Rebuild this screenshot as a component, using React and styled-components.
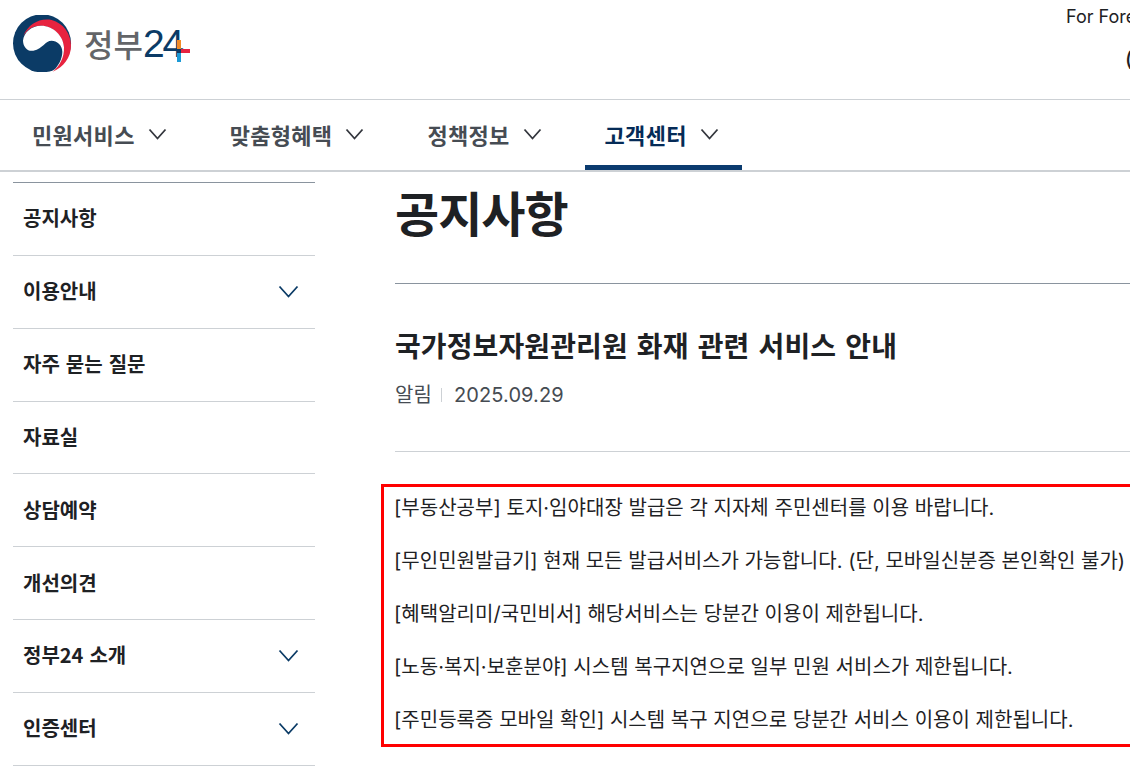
import React from 'react'
import styled, { createGlobalStyle } from 'styled-components'

const Global = createGlobalStyle`
  html, body {
    margin: 0;
    padding: 0;
    background: #fff;
    overflow: hidden;
    height: 100%;
  }
  body {
    font-family: Inter, "Noto Sans CJK KR", sans-serif;
    color: #1e2124;
  }
`

const Page = styled.div`
  width: 1130px;
  height: 771px;
  overflow: hidden;
`

const TopBar = styled.header`
  height: 99px;
  border-bottom: 1px solid #cdd1d5;
  display: flex;
  justify-content: space-between;
  padding-left: 13px;
`

const Logo = styled.a`
  display: flex;
  align-items: center;
  height: 86px;
  gap: 12px;
`

const LogoWord = styled.span`
  font-family: "Noto Sans CJK KR", sans-serif;
  font-size: 32px;
  font-weight: 500;
  color: #636568;
  line-height: 1;
`

const LogoNum = styled.span`
  position: relative;
  font-family: "Liberation Sans", sans-serif;
  font-size: 39px;
  letter-spacing: -2px;
  margin-left: -12px;
  color: #0b3b66;
  line-height: 1;
`

const LogoPlus = styled.svg`
  position: absolute;
  left: 34px;
  top: 16px;
`

const TopLinks = styled.div`
  width: 64px;
  overflow: hidden;
  white-space: nowrap;
`

const Foreign = styled.div`
  font-size: 18px;
  line-height: 22px;
  margin-top: 6px;
  color: #1e2124;
`

const Bracket = styled.div`
  font-size: 20px;
  font-weight: 500;
  line-height: 26px;
  margin-top: 18px;
  padding-left: 59px;
  color: #1e2124;
`

const Nav = styled.nav`
  height: 70px;
  border-bottom: 2px solid #cdd1d5;
  display: flex;
  padding-left: 12px;
  gap: 20px;
`

const NavItem = styled.a`
  display: flex;
  align-items: center;
  gap: 12px;
  height: 70px;
  padding: 3px 22px 0 20px;
  box-sizing: border-box;
  font-size: 22px;
  font-weight: 700;
  letter-spacing: 0.3px;
  color: ${p => (p.$active ? '#052b57' : '#464c53')};
  border-bottom: 5px solid ${p => (p.$active ? '#0b3b6f' : 'transparent')};
`

const Body = styled.div`
  display: flex;
  padding-left: 13px;
  padding-top: 10px;
`

const Side = styled.aside`
  width: 302px;
  flex: none;
  border-top: 1px solid #8a949e;
`

const SideItem = styled.a`
  height: 72.85px;
  box-sizing: border-box;
  display: flex;
  align-items: center;
  justify-content: space-between;
  padding: 0 15px 2px 10px;
  border-bottom: 1px solid #cdd1d5;
  font-family: "Noto Sans CJK KR", sans-serif;
  font-size: 20px;
  font-weight: 700;
  word-spacing: 1.5px;
  color: #1e2124;
  svg {
    margin-top: 2px;
  }
`

const Main = styled.main`
  width: 760px;
  flex: none;
  margin-left: 80px;
`

const PageTitle = styled.h1`
  margin: 1px 0 0;
  font-size: 48px;
  line-height: 64px;
  font-weight: 700;
  letter-spacing: -1px;
  color: #1e2124;
  padding-bottom: 36px;
  border-bottom: 1px solid #8a949e;
`

const PostTitle = styled.h2`
  margin: 43px 0 0;
  font-size: 28px;
  line-height: 40px;
  font-weight: 700;
  letter-spacing: 0.1px;
  word-spacing: 2.4px;
  color: #1e2124;
`

const Meta = styled.div`
  display: flex;
  align-items: center;
  margin-top: 13px;
  padding-bottom: 41px;
  border-bottom: 1px solid #cdd1d5;
  font-size: 20px;
  line-height: 30px;
  letter-spacing: 0.1px;
  color: #464c53;
`

const Tag = styled.span`
  padding-right: 10px;
  margin-right: 12px;
  position: relative;
  &::after {
    content: '';
    position: absolute;
    right: 0;
    top: 8px;
    height: 14px;
    width: 1px;
    background: #cdd1d5;
  }
`

const Notice = styled.div`
  margin: 32px 0 0 -14px;
  border: 3px solid #ff0000;
  border-right: none;
  padding: 1px 0 4px 10px;
  white-space: nowrap;
  overflow: hidden;
`

const NoticeLine = styled.p`
  margin: 0 0 13px;
  font-size: 20px;
  line-height: 40px;
  letter-spacing: 0.03px;
  color: #1e2124;
  &:last-child {
    margin-bottom: 0;
  }
`

const ChevronSvg = styled.svg`
  flex: none;
  color: ${p => p.$color};
`

const Chevron = ({ w, h, color }) => (
  <ChevronSvg width={w + 4} height={h + 4} viewBox={`-2 -2 ${w + 4} ${h + 4}`} $color={color} aria-hidden="true">
    <path d={`M0.5 0.5L${w / 2} ${h - 0.5}L${w - 0.5} 0.5`} fill="none" stroke="currentColor" strokeWidth="1.8" />
  </ChevronSvg>
)

const Taegeuk = () => (
  <svg width="59" height="57" viewBox="24 18 177 171" aria-hidden="true">
    <circle cx="111" cy="103" r="87" fill="#0b3b66" />
    <path d="M55 80C70 45 105 26 140 33C175 42 198 75 198 110C198 145 175 175 143 188C165 170 178 140 176 112C172 75 140 50 105 50C85 50 68 60 55 80Z" fill="#e7233f" />
    <path d="M54 95C56 70 80 50 108 50C145 50 175 80 177 115C178 145 165 170 145 186C160 170 172 150 172 128C172 108 155 95 140 95C120 95 115 118 85 125C68 128 55 115 54 95Z" fill="#fff" />
  </svg>
)

const navItems = ['민원서비스', '맞춤형혜택', '정책정보', '고객센터']

const sideItems = [
  ['공지사항', false],
  ['이용안내', true],
  ['자주 묻는 질문', false],
  ['자료실', false],
  ['상담예약', false],
  ['개선의견', false],
  ['정부24 소개', true],
  ['인증센터', true],
]

const notices = [
  '[부동산공부] 토지·임야대장 발급은 각 지자체 주민센터를 이용 바랍니다.',
  '[무인민원발급기] 현재 모든 발급서비스가 가능합니다. (단, 모바일신분증 본인확인 불가)',
  '[혜택알리미/국민비서] 해당서비스는 당분간 이용이 제한됩니다.',
  '[노동·복지·보훈분야] 시스템 복구지연으로 일부 민원 서비스가 제한됩니다.',
  '[주민등록증 모바일 확인] 시스템 복구 지연으로 당분간 서비스 이용이 제한됩니다.',
]

const App = () => {
  return (
    <Page>
      <Global />
      <TopBar>
        <Logo>
          <Taegeuk />
          <LogoWord>정부</LogoWord>
          <LogoNum>
            24
            <LogoPlus width="13" height="22" viewBox="0 0 13 22">
              <rect x="0" y="0" width="4" height="10" fill="#f28c28" />
              <rect x="0" y="9" width="4" height="4" fill="#0b3b66" />
              <rect x="0" y="13" width="4" height="9" fill="#1c9ad6" />
              <rect x="4" y="9" width="9" height="4" fill="#e7233f" />
            </LogoPlus>
          </LogoNum>
        </Logo>
        <TopLinks>
          <Foreign>For Foreigners</Foreign>
          <Bracket>(</Bracket>
        </TopLinks>
      </TopBar>
      <Nav>
        {navItems.map((item, i) => (
          <NavItem key={item} $active={i === 3}>
            {item}
            <Chevron w={17} h={10} color="#33363d" />
          </NavItem>
        ))}
      </Nav>
      <Body>
        <Side>
          {sideItems.map(([label, more]) => (
            <SideItem key={label}>
              {label}
              {more && <Chevron w={19} h={11} color="#0b3b66" />}
            </SideItem>
          ))}
        </Side>
        <Main>
          <PageTitle>공지사항</PageTitle>
          <PostTitle>국가정보자원관리원 화재 관련 서비스 안내</PostTitle>
          <Meta>
            <Tag>알림</Tag>
            2025.09.29
          </Meta>
          <Notice>
            {notices.map(line => (
              <NoticeLine key={line}>{line}</NoticeLine>
            ))}
          </Notice>
        </Main>
      </Body>
    </Page>
  )
}

export default App
